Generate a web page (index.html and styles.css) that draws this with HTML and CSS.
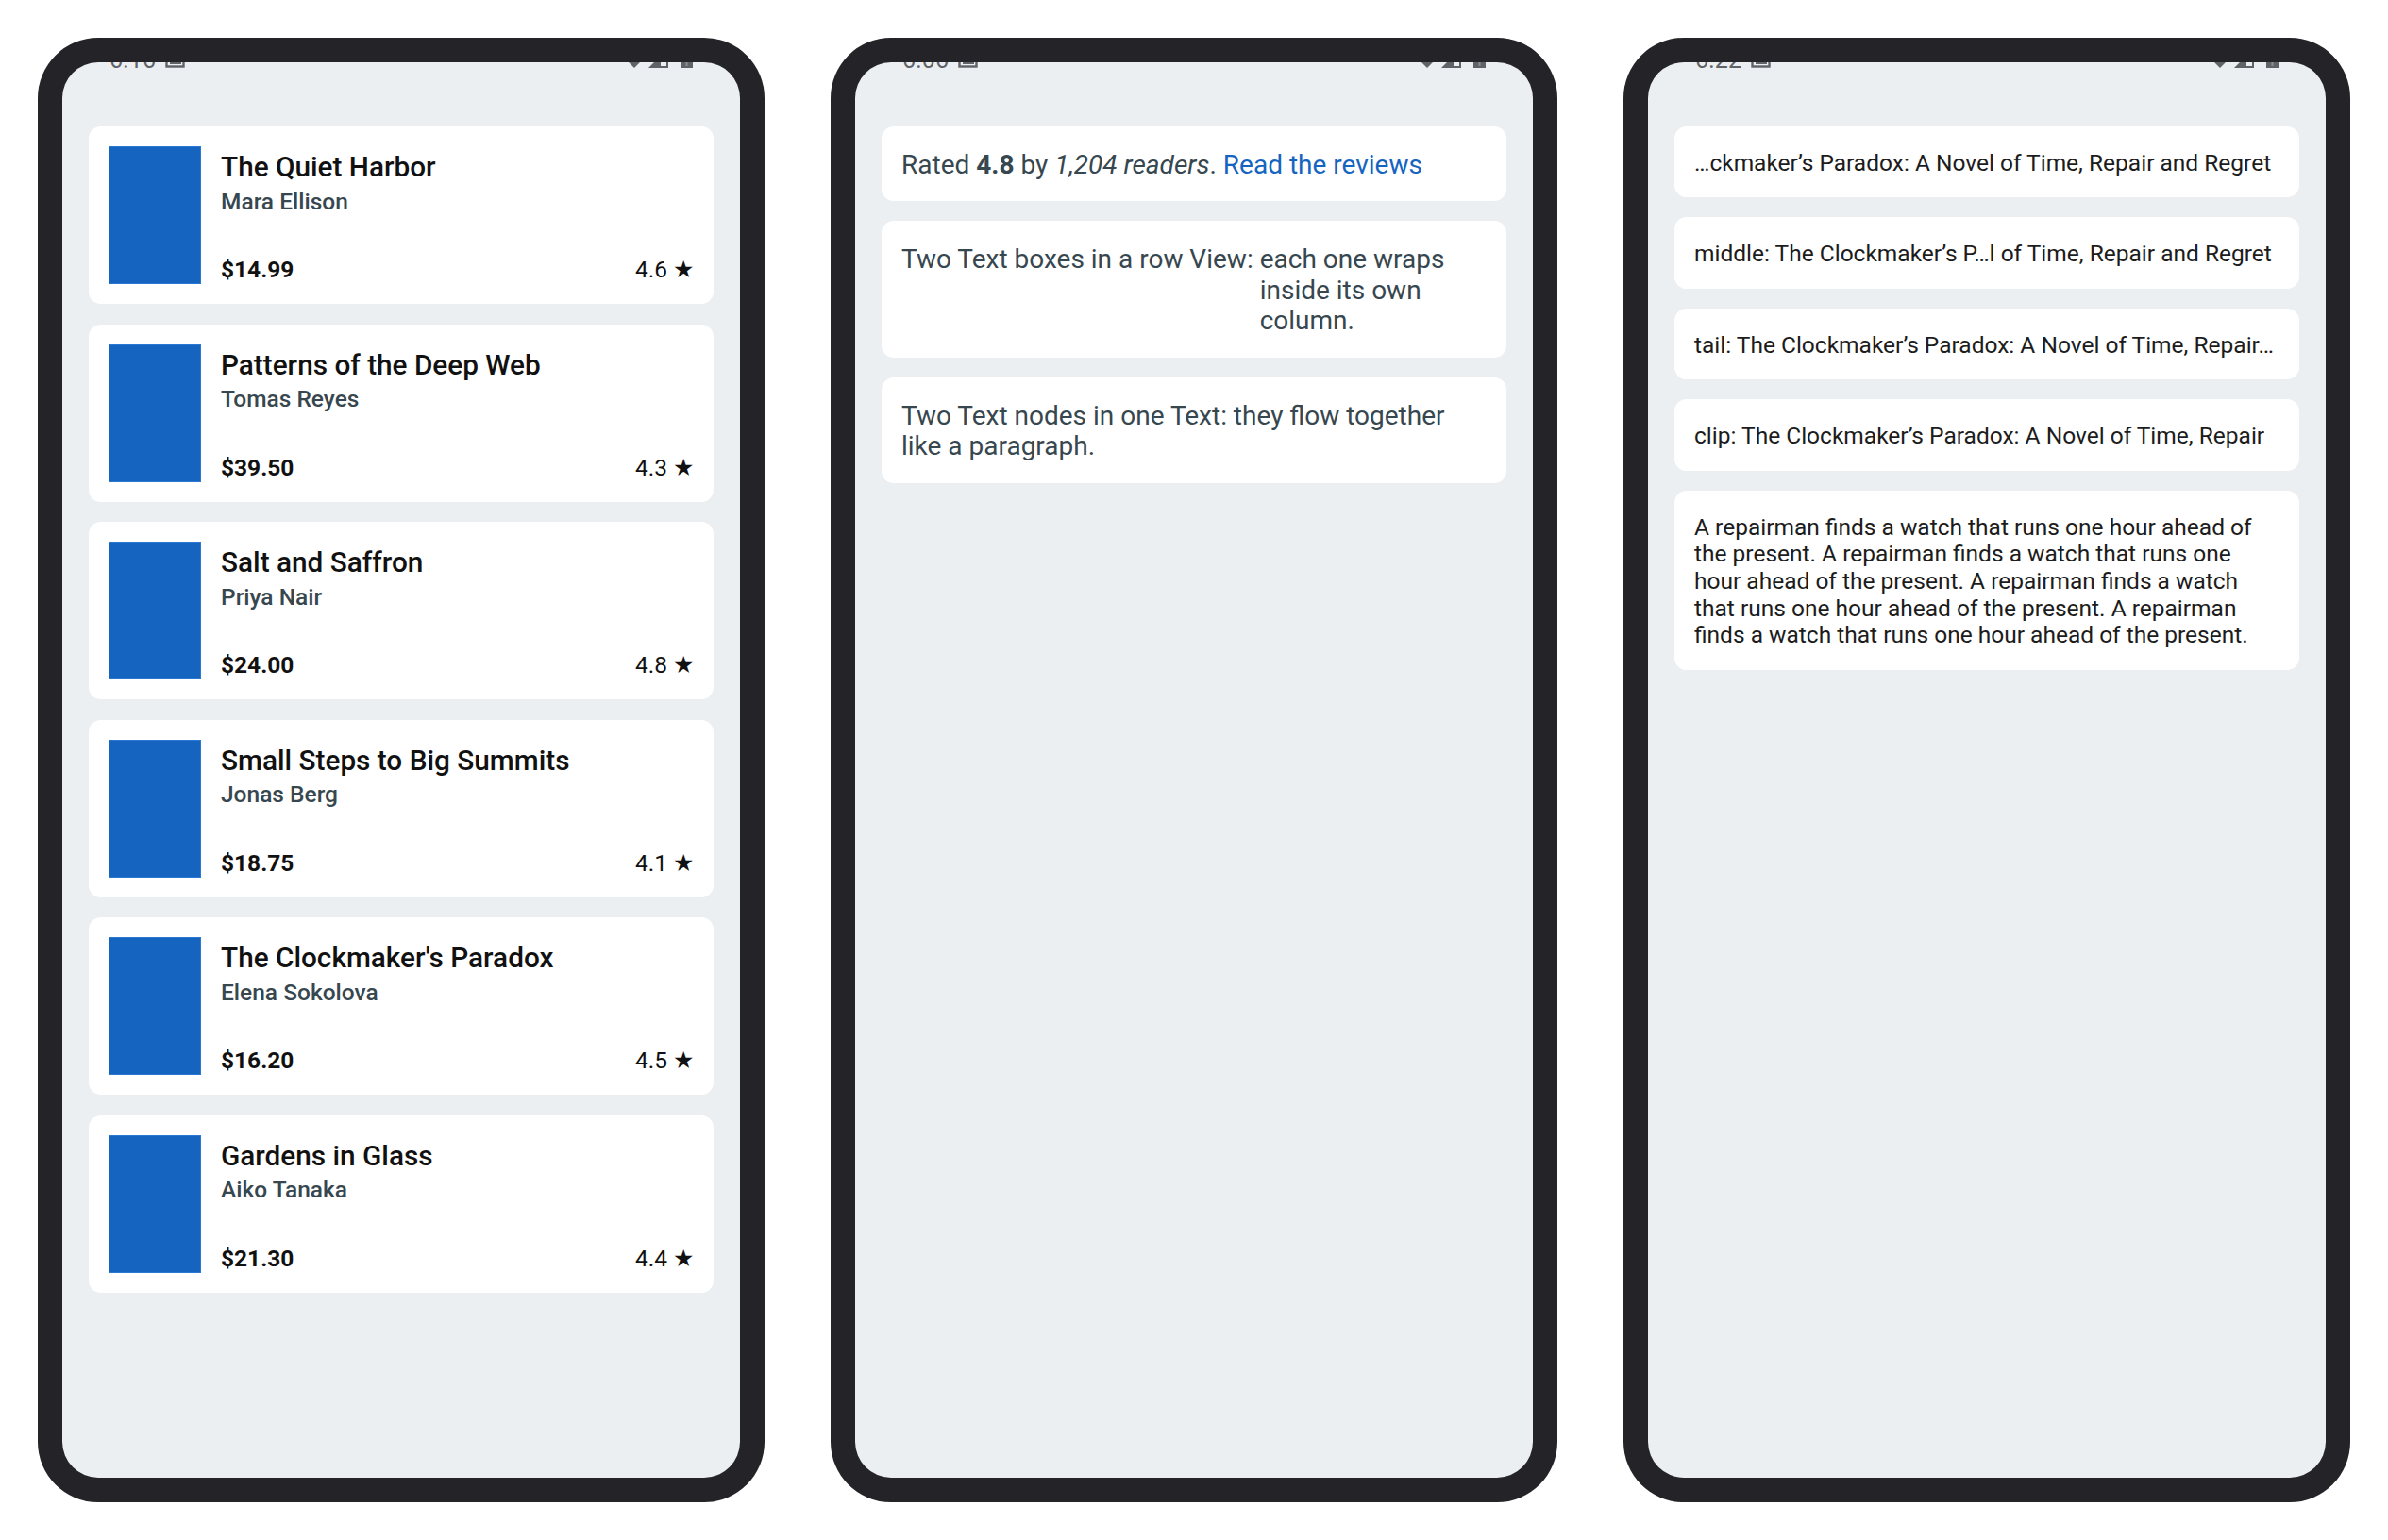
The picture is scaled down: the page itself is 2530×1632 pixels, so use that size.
FILE: index.html
```html
<!DOCTYPE html>
<html lang="en">
<head>
<meta charset="utf-8">
<title>Text layouts</title>
<link rel="stylesheet" href="styles.css">
</head>
<body>
<div class="stage">

  <div class="phone">
    <div class="screen">
      <div class="statusbar">
        <span class="time">6:16</span>
        <svg class="notif" width="21" height="21" viewBox="0 0 21 21"><rect x="1.5" y="1.5" width="18" height="18" fill="none" stroke="#5f6368" stroke-width="2.4"/><path d="M6 10h10v6H6z" fill="none" stroke="#5f6368" stroke-width="2"/></svg>
        <span class="spacer"></span>
        <svg class="wifi" width="26" height="22" viewBox="0 0 26 22"><path d="M13 22 L0 9 Q13 -3 26 9 Z" fill="#5f6368"/></svg>
        <svg class="signal" width="21" height="21" viewBox="0 0 21 21"><path d="M21 0 V21 H0 Z" fill="#5f6368"/><path d="M19 11 V19 H13 V11 Z" fill="#eceff1"/></svg>
        <svg class="battery" width="13" height="22" viewBox="0 0 13 22"><rect x="0" y="0" width="13" height="22" fill="#5f6368"/><rect x="5.5" y="12" width="2" height="8" fill="#8a8d91"/></svg>
      </div>
      <div class="content books">
        <div class="book">
          <div class="cover"></div>
          <div class="info">
            <div><div class="title">The Quiet Harbor</div><div class="author">Mara Ellison</div></div>
            <div class="meta"><span class="price">$14.99</span><span class="rating">4.6 ★</span></div>
          </div>
        </div>
        <div class="book">
          <div class="cover"></div>
          <div class="info">
            <div><div class="title">Patterns of the Deep Web</div><div class="author">Tomas Reyes</div></div>
            <div class="meta"><span class="price">$39.50</span><span class="rating">4.3 ★</span></div>
          </div>
        </div>
        <div class="book">
          <div class="cover"></div>
          <div class="info">
            <div><div class="title">Salt and Saffron</div><div class="author">Priya Nair</div></div>
            <div class="meta"><span class="price">$24.00</span><span class="rating">4.8 ★</span></div>
          </div>
        </div>
        <div class="book">
          <div class="cover"></div>
          <div class="info">
            <div><div class="title">Small Steps to Big Summits</div><div class="author">Jonas Berg</div></div>
            <div class="meta"><span class="price">$18.75</span><span class="rating">4.1 ★</span></div>
          </div>
        </div>
        <div class="book">
          <div class="cover"></div>
          <div class="info">
            <div><div class="title">The Clockmaker's Paradox</div><div class="author">Elena Sokolova</div></div>
            <div class="meta"><span class="price">$16.20</span><span class="rating">4.5 ★</span></div>
          </div>
        </div>
        <div class="book">
          <div class="cover"></div>
          <div class="info">
            <div><div class="title">Gardens in Glass</div><div class="author">Aiko Tanaka</div></div>
            <div class="meta"><span class="price">$21.30</span><span class="rating">4.4 ★</span></div>
          </div>
        </div>
      </div>
    </div>
  </div>

  <div class="phone">
    <div class="screen">
      <div class="statusbar">
        <span class="time">6:06</span>
        <svg class="notif" width="21" height="21" viewBox="0 0 21 21"><rect x="1.5" y="1.5" width="18" height="18" fill="none" stroke="#5f6368" stroke-width="2.4"/><path d="M6 10h10v6H6z" fill="none" stroke="#5f6368" stroke-width="2"/></svg>
        <span class="spacer"></span>
        <svg class="wifi" width="26" height="22" viewBox="0 0 26 22"><path d="M13 22 L0 9 Q13 -3 26 9 Z" fill="#5f6368"/></svg>
        <svg class="signal" width="21" height="21" viewBox="0 0 21 21"><path d="M21 0 V21 H0 Z" fill="#5f6368"/><path d="M19 11 V19 H13 V11 Z" fill="#eceff1"/></svg>
        <svg class="battery" width="13" height="22" viewBox="0 0 13 22"><rect x="0" y="0" width="13" height="22" fill="#5f6368"/><rect x="5.5" y="12" width="2" height="8" fill="#8a8d91"/></svg>
      </div>
      <div class="content">
        <div class="note">Rated <b>4.8</b> by <i>1,204 readers</i>. <span class="link">Read the reviews</span></div>
        <div class="note row">
          <div class="col-a">Two Text boxes in a row View:</div>
          <div class="col-b">each one wraps inside its own column.</div>
        </div>
        <div class="note">Two Text nodes in one Text: they flow together like a paragraph.</div>
      </div>
    </div>
  </div>

  <div class="phone">
    <div class="screen">
      <div class="statusbar">
        <span class="time">6:22</span>
        <svg class="notif" width="21" height="21" viewBox="0 0 21 21"><rect x="1.5" y="1.5" width="18" height="18" fill="none" stroke="#5f6368" stroke-width="2.4"/><path d="M6 10h10v6H6z" fill="none" stroke="#5f6368" stroke-width="2"/></svg>
        <span class="spacer"></span>
        <svg class="wifi" width="26" height="22" viewBox="0 0 26 22"><path d="M13 22 L0 9 Q13 -3 26 9 Z" fill="#5f6368"/></svg>
        <svg class="signal" width="21" height="21" viewBox="0 0 21 21"><path d="M21 0 V21 H0 Z" fill="#5f6368"/><path d="M19 11 V19 H13 V11 Z" fill="#eceff1"/></svg>
        <svg class="battery" width="13" height="22" viewBox="0 0 13 22"><rect x="0" y="0" width="13" height="22" fill="#5f6368"/><rect x="5.5" y="12" width="2" height="8" fill="#8a8d91"/></svg>
      </div>
      <div class="content">
        <div class="line">…ckmaker’s Paradox: A Novel of Time, Repair and Regret</div>
        <div class="line">middle: The Clockmaker’s P…l of Time, Repair and Regret</div>
        <div class="line">tail: The Clockmaker’s Paradox: A Novel of Time, Repair…</div>
        <div class="line">clip: The Clockmaker’s Paradox: A Novel of Time, Repair</div>
        <div class="line para">A repairman finds a watch that runs one hour ahead of the present. A repairman finds a watch that runs one hour ahead of the present. A repairman finds a watch that runs one hour ahead of the present. A repairman finds a watch that runs one hour ahead of the present.</div>
      </div>
    </div>
  </div>

</div>
</body>
</html>
```
FILE: styles.css
```css
html, body {
  margin: 0;
  padding: 0;
  background: #ffffff;
}

body {
  font-family: Roboto, "Noto Sans", "Liberation Sans", sans-serif;
}

.stage {
  display: flex;
  gap: 70px;
  padding: 40px;
}

.phone {
  width: 770px;
  height: 1552px;
  box-sizing: border-box;
  padding: 26px;
  background: #232328;
  border-radius: 64px;
  flex: none;
}

.screen {
  height: 100%;
  background: #eceff1;
  border-radius: 38px;
  overflow: hidden;
  display: flex;
  flex-direction: column;
}

/* status bar: mostly hidden under the bezel, only bottom 6px show */
.statusbar {
  height: 40px;
  margin-top: -34px;
  padding: 0 50px;
  display: flex;
  align-items: flex-end;
  color: #5f6368;
  flex: none;
}

.time {
  font-size: 25px;
  line-height: 25px;
  margin-bottom: -4px;
  letter-spacing: 0.3px;
}

.notif {
  margin-left: 10px;
  display: block;
}

.spacer {
  flex: 1;
}

.wifi, .signal, .battery {
  display: block;
}

.signal {
  margin-left: 2px;
}

.battery {
  margin-left: 13px;
}

.content {
  padding: 62px 28px 0;
  display: flex;
  flex-direction: column;
  gap: 21px;
}

.content.books {
  gap: 21.5px;
}

/* phone 1: book cards */
.book {
  display: flex;
  gap: 21px;
  padding: 21px;
  background: #ffffff;
  border-radius: 13px;
}

.cover {
  width: 98px;
  height: 146px;
  flex: none;
  background: #1565c0;
  box-sizing: border-box;
  border: 1px solid #2a78d2;
}

.info {
  flex: 1;
  display: flex;
  flex-direction: column;
  justify-content: space-between;
  min-width: 0;
}

.title {
  font-size: 29.75px;
  line-height: 43.7px;
  font-weight: 500;
  color: #111111;
}

.author {
  font-size: 24.5px;
  line-height: 30px;
  font-weight: 500;
  color: #37474f;
}

.meta {
  display: flex;
  justify-content: space-between;
  font-size: 24.5px;
  line-height: 31px;
  color: #111111;
}

.price {
  font-weight: 700;
}

.rating {
  font-weight: 400;
}

/* phone 2: rich text notes */
.note {
  background: #ffffff;
  border-radius: 13px;
  padding: 24.6px 21px 21.8px;
  font-size: 28px;
  line-height: 32.8px;
  color: #37474f;
}

.note b {
  font-weight: 700;
}

.link {
  color: #1565c0;
}

.row {
  display: flex;
}

.col-a {
  flex: none;
  margin-right: 7px;
}

.col-b {
  flex: 1;
  min-width: 0;
}

/* phone 3: truncation lines */
.line {
  background: #ffffff;
  border-radius: 13px;
  padding: 24.7px 21px 22.1px;
  font-size: 24.5px;
  line-height: 28.7px;
  color: #1c1c1c;
  white-space: nowrap;
  overflow: hidden;
}

.line.para {
  white-space: normal;
}
```
